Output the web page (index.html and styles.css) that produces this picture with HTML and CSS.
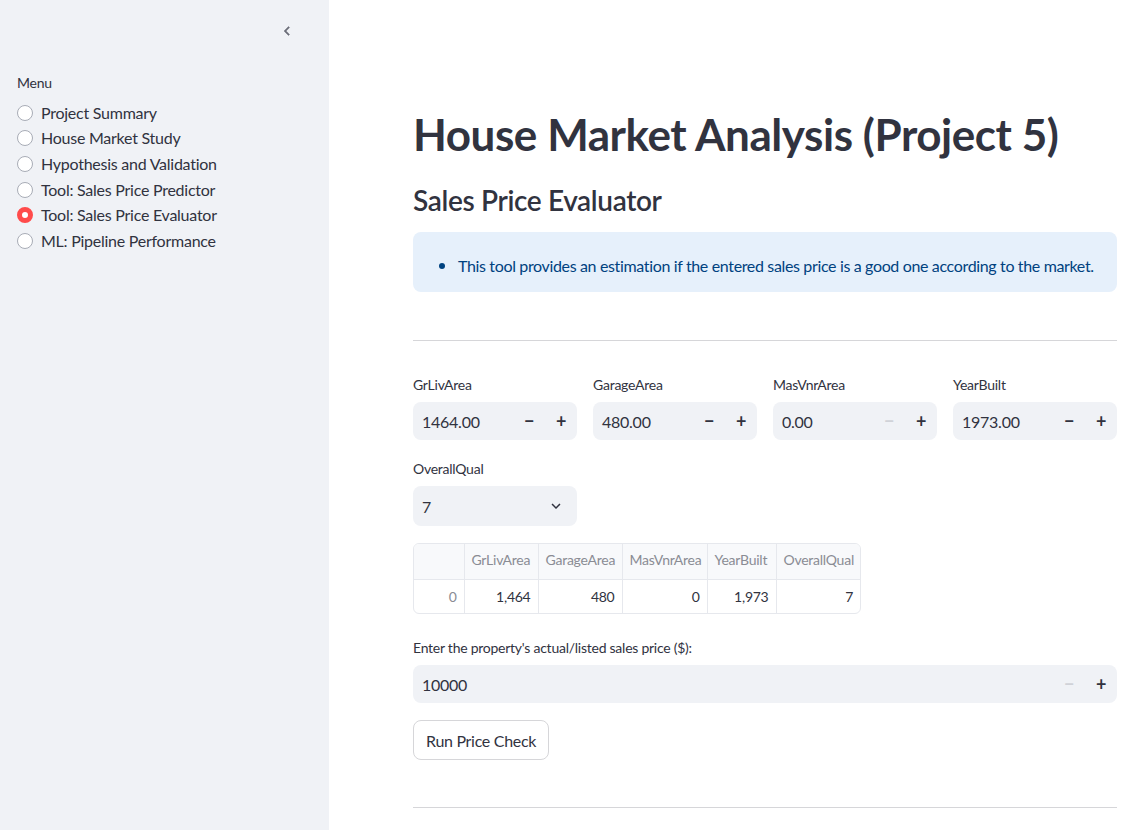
FILE: index.html
```html
<!DOCTYPE html>
<html>
<head>
<meta charset="utf-8">
<link rel="stylesheet" href="styles.css">
</head>
<body>
<div class="app">
  <aside class="sidebar">
    <div class="sb-top">
      <svg class="chev" width="18" height="18" viewBox="0 0 24 24"><path d="M15.4 7.4 14 6l-6 6 6 6 1.4-1.4L10.8 12z" fill="#6b6d78" stroke="#6b6d78" stroke-width="0.6"/></svg>
    </div>
    <div class="menu-label">Menu</div>
    <ul class="radios">
      <li><span class="radio"></span>Project Summary</li>
      <li><span class="radio"></span>House Market Study</li>
      <li><span class="radio"></span>Hypothesis and Validation</li>
      <li><span class="radio"></span>Tool: Sales Price Predictor</li>
      <li><span class="radio on"></span>Tool: Sales Price Evaluator</li>
      <li><span class="radio"></span>ML: Pipeline Performance</li>
    </ul>
  </aside>
  <main class="main">
    <h1>House Market Analysis (Project 5)</h1>
    <h2>Sales Price Evaluator</h2>
    <div class="info">
      <ul><li>This tool provides an estimation if the entered sales price is a good one according to the market.</li></ul>
    </div>
    <hr class="rule">
    <div class="cols">
      <div class="field">
        <label>GrLivArea</label>
        <div class="num"><span class="val">1464.00</span><span class="btn">&minus;</span><span class="btn">+</span></div>
      </div>
      <div class="field">
        <label>GarageArea</label>
        <div class="num"><span class="val">480.00</span><span class="btn">&minus;</span><span class="btn">+</span></div>
      </div>
      <div class="field">
        <label>MasVnrArea</label>
        <div class="num"><span class="val">0.00</span><span class="btn dis">&minus;</span><span class="btn">+</span></div>
      </div>
      <div class="field">
        <label>YearBuilt</label>
        <div class="num"><span class="val">1973.00</span><span class="btn">&minus;</span><span class="btn">+</span></div>
      </div>
      <div class="field">
        <label>OverallQual</label>
        <div class="select"><span class="val">7</span>
          <svg width="18" height="18" viewBox="0 0 24 24"><path d="M7.4 8.6 12 13.2l4.6-4.6L18 10l-6 6-6-6z" fill="#31333f"/></svg>
        </div>
      </div>
    </div>
    <div class="table-wrap">
      <table class="df">
        <colgroup><col style="width:50px"><col style="width:74px"><col style="width:84px"><col style="width:85px"><col style="width:69px"><col style="width:84px"></colgroup>
        <thead><tr><th class="idx"></th><th>GrLivArea</th><th>GarageArea</th><th>MasVnrArea</th><th>YearBuilt</th><th>OverallQual</th></tr></thead>
        <tbody><tr><td class="idx">0</td><td>1,464</td><td>480</td><td>0</td><td>1,973</td><td>7</td></tr></tbody>
      </table>
    </div>
    <div class="field wide">
      <label>Enter the property's actual/listed sales price ($):</label>
      <div class="num"><span class="val">10000</span><span class="btn dis">&minus;</span><span class="btn">+</span></div>
    </div>
    <button class="run">Run Price Check</button>
    <hr class="rule bottom">
  </main>
</div>
</body>
</html>
```

FILE: styles.css
```css
* { box-sizing: border-box; }
html, body { margin: 0; padding: 0; }
body {
  font-family: Lato, "Noto Sans", sans-serif;
  color: #31333f;
  background: #fff;
  width: 1145px;
  height: 830px;
  overflow: hidden;
  letter-spacing: -0.25px;
}
.app { display: flex; height: 830px; }
.sidebar {
  width: 329px;
  flex: none;
  background: #f0f2f6;
  padding: 0 16px 0 17px;
}
.sb-top { height: 74px; display: flex; justify-content: flex-end; padding-top: 22px; padding-right: 17px; }
.chev { display: block; }
.menu-label { font-size: 14px; line-height: 18px; height: 26px; }
.radios { list-style: none; margin: 0; padding: 0; }
.radios li {
  display: flex; align-items: center;
  font-size: 16px; height: 25.6px; line-height: 20px;
}
.radio {
  width: 16px; height: 16px; border-radius: 50%;
  border: 1px solid #a8acb6; background: #fff;
  margin: 0 8px 0 0; flex: none;
}
.radio.on { border: 5px solid #ff4b4b; background: #fff; }
.main { flex: 1; padding: 106px 29px 0 84px; }
h1 {
  font-size: 44px; font-weight: 700; line-height: 56px; margin: 0;
  letter-spacing: -0.45px;
}
h2 { font-size: 28px; font-weight: 600; margin: 20px 0 0; line-height: 36px; letter-spacing: -0.35px; }
.info {
  margin-top: 14px;
  background: #e6f0fb; color: #004280;
  border-radius: 8px; height: 60px;
  display: flex; align-items: center;
  font-size: 16px; letter-spacing: -0.35px;
  padding-top: 4px;
}
.info ul { margin: 0; padding-left: 45px; }
.info li::marker { font-size: 18px; }
.rule { border: none; border-top: 1px solid #d6d6d9; margin: 48px 0 0; }
.cols {
  margin-top: 35px;
  display: grid; grid-template-columns: repeat(4, 164px); column-gap: 16px; row-gap: 20px;
}
.field label { display: block; font-size: 14px; line-height: 18px; margin-bottom: 8px; }
.num, .select {
  height: 38px; background: #f0f2f6; border-radius: 8px;
  display: flex; align-items: center; font-size: 16px;
}
.select { height: 40px; padding-right: 12px; }
.val { flex: 1; padding-left: 9px; }
.btn { width: 32px; text-align: center; font-weight: 700; font-size: 18px; color: #31333f; }
.btn.dis { color: #d0d2d8; }
.table-wrap {
  margin-top: 17px; display: inline-block;
  border: 1px solid #e6e8ed; border-radius: 6px; overflow: hidden;
}
.df { border-collapse: collapse; font-size: 14px; table-layout: fixed; width: 446px; }
.df th, .df td { border-left: 1px solid #e6e8ed; padding: 0 7px; text-align: right; white-space: nowrap; }
.df th:first-child, .df td:first-child { border-left: none; }
.df th { height: 35px; font-weight: 400; color: #8a8c94; background: #f8f9fb; border-bottom: 1px solid #e6e8ed; text-align: left; padding-bottom: 3px; }
.df td { height: 34px; }
.df .idx { color: #8a8c94; }
.wide { margin-top: 22px; }
.wide .num { height: 38px; }
.run {
  margin-top: 17px; display: block;
  font-family: inherit; font-size: 16px; color: #31333f; letter-spacing: -0.3px;
  background: #fff; border: 1px solid #d6d6d9; border-radius: 8px;
  height: 40px; padding: 0 12px;
}
.rule.bottom { margin-top: 47px; }
```
